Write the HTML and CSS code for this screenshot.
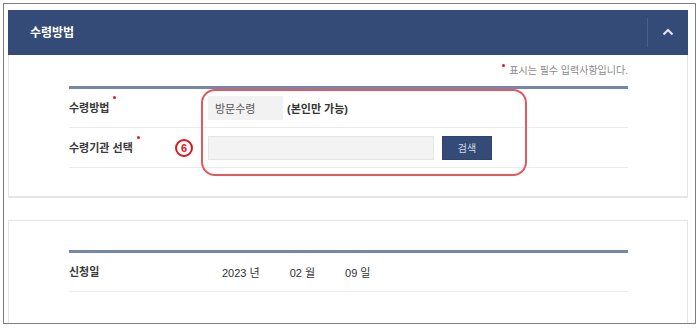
FILE: index.html
```html
<!DOCTYPE html>
<html lang="ko">
<head>
<meta charset="utf-8">
<title>수령방법</title>
<link rel="stylesheet" href="styles.css">
</head>
<body>
<div class="frame">
  <section class="card">
    <div class="card-head">
      <h2 class="card-title">수령방법</h2>
      <button class="toggle" type="button" aria-label="접기">
        <svg width="12" height="8" viewBox="0 0 12 8"><path d="M1.5 6.5 L6 2 L10.5 6.5" fill="none" stroke="#e2e7f0" stroke-width="2"/></svg>
      </button>
    </div>
    <div class="card-body">
      <p class="note"><span class="req-dot"></span>표시는 필수 입력사항입니다.</p>
      <div class="table">
        <div class="row">
          <div class="th">수령방법<span class="req"></span></div>
          <div class="td">
            <span class="fixed-box">방문수령</span>
            <strong class="hint">(본인만 가능)</strong>
          </div>
        </div>
        <div class="row">
          <div class="th">수령기관 선택<span class="req"></span></div>
          <div class="td">
            <input class="text-input" type="text" readonly>
            <button class="btn-search" type="button">검색</button>
          </div>
        </div>
        <div class="highlight"></div>
        <span class="marker">6</span>
      </div>
    </div>
  </section>

  <section class="card card-plain">
    <div class="card-body card-body-plain">
      <div class="table">
        <div class="row row-date">
          <div class="th">신청일</div>
          <div class="td td-date">
            <span class="date-part">2023 년</span>
            <span class="date-part">02 월</span>
            <span class="date-part">09 일</span>
          </div>
        </div>
      </div>
    </div>
  </section>
</div>
</body>
</html>
```

FILE: styles.css
```css
* { box-sizing: border-box; }

html, body {
  margin: 0;
  padding: 0;
  background: #ffffff;
}

body {
  font-family: "Liberation Sans", "Noto Sans CJK KR", sans-serif;
  font-size: 11px;
  color: #333333;
}

.frame {
  margin: 3px 0 0 3px;
  width: 693px;
  height: 321px;
  border: 1px solid #7d7d7d;
  overflow: hidden;
  padding: 6px 7px 0 4px;
  background: #ffffff;
}

.card {
  width: 680px;
  border: 1px solid #e4e4e4;
  border-top: none;
  border-bottom: 2px solid #e6e6e6;
  background: #ffffff;
}

.card-head {
  display: flex;
  align-items: center;
  justify-content: space-between;
  height: 45px;
  margin: 0 -1px;
  background: #344b77;
  padding: 0 0 0 22px;
}

.card-title {
  margin: 0;
  font-size: 12px;
  font-weight: bold;
  color: #ffffff;
  line-height: 16px;
}

.toggle {
  display: flex;
  align-items: center;
  justify-content: center;
  width: 41px;
  height: 29px;
  margin: 0;
  padding: 0 0 2px 0;
  border: none;
  border-left: 1px solid #4a5f88;
  background: transparent;
}

.card-body {
  padding: 9px 59px 28px 60px;
}

.note {
  margin: 0 0 8px 0;
  text-align: right;
  font-size: 10px;
  line-height: 14px;
  color: #8a8a8a;
}

.req-dot {
  display: inline-block;
  width: 3px;
  height: 3px;
  border-radius: 50%;
  background: #e8141c;
  vertical-align: top;
  margin: 0 4px 0 0;
  position: relative;
  top: 0px;
}

.table {
  position: relative;
  border-top: 3px solid #7587a8;
}

.row {
  display: flex;
  align-items: center;
  height: 40px;
  border-bottom: 1px solid #ececec;
}

.row:first-child {
  height: 39px;
}

.th {
  width: 139px;
  flex: none;
  font-weight: bold;
  color: #3a3a3a;
  line-height: 16px;
  position: relative;
}

.req {
  display: inline-block;
  width: 3px;
  height: 3px;
  border-radius: 50%;
  background: #e8141c;
  margin-left: 4px;
  vertical-align: top;
  position: relative;
  top: -4px;
}

.td {
  display: flex;
  align-items: center;
}

.fixed-box {
  display: inline-flex;
  align-items: center;
  width: 75px;
  height: 24px;
  padding-left: 7px;
  background: #f2f2f2;
  color: #555555;
  margin-right: 4px;
}

.hint {
  font-weight: bold;
  color: #333333;
}

.text-input {
  width: 226px;
  height: 24px;
  margin: 0 8px 0 0;
  padding: 0;
  background: #f3f3f3;
  border: 1px solid #e6e6e6;
}

.btn-search {
  width: 50px;
  height: 24px;
  margin: 0;
  padding: 0;
  border: 1px solid #2f4570;
  background: #344b77;
  color: #d3dae6;
  font-family: "Liberation Sans", "Noto Sans CJK KR", sans-serif;
  font-size: 10px;
}

.highlight {
  position: absolute;
  left: 132px;
  top: 0px;
  width: 326px;
  height: 87px;
  border: 2px solid #e2595e;
  border-radius: 14px;
  pointer-events: none;
}

.marker {
  position: absolute;
  left: 106px;
  top: 50px;
  width: 18px;
  height: 18px;
  border: 2px solid #e2141c;
  border-radius: 50%;
  display: flex;
  align-items: center;
  justify-content: center;
  font-size: 11px;
  font-weight: bold;
  color: #e2141c;
  line-height: 1;
}

.card-plain {
  margin-top: 22px;
  border-top: 1px solid #e4e4e4;
  height: 120px;
}

.card-body-plain {
  padding-top: 29px;
}

.row-date {
  height: 39px !important;
}

.td-date {
  padding-left: 14px;
  gap: 30px;
}

.date-part {
  color: #333333;
}
```
